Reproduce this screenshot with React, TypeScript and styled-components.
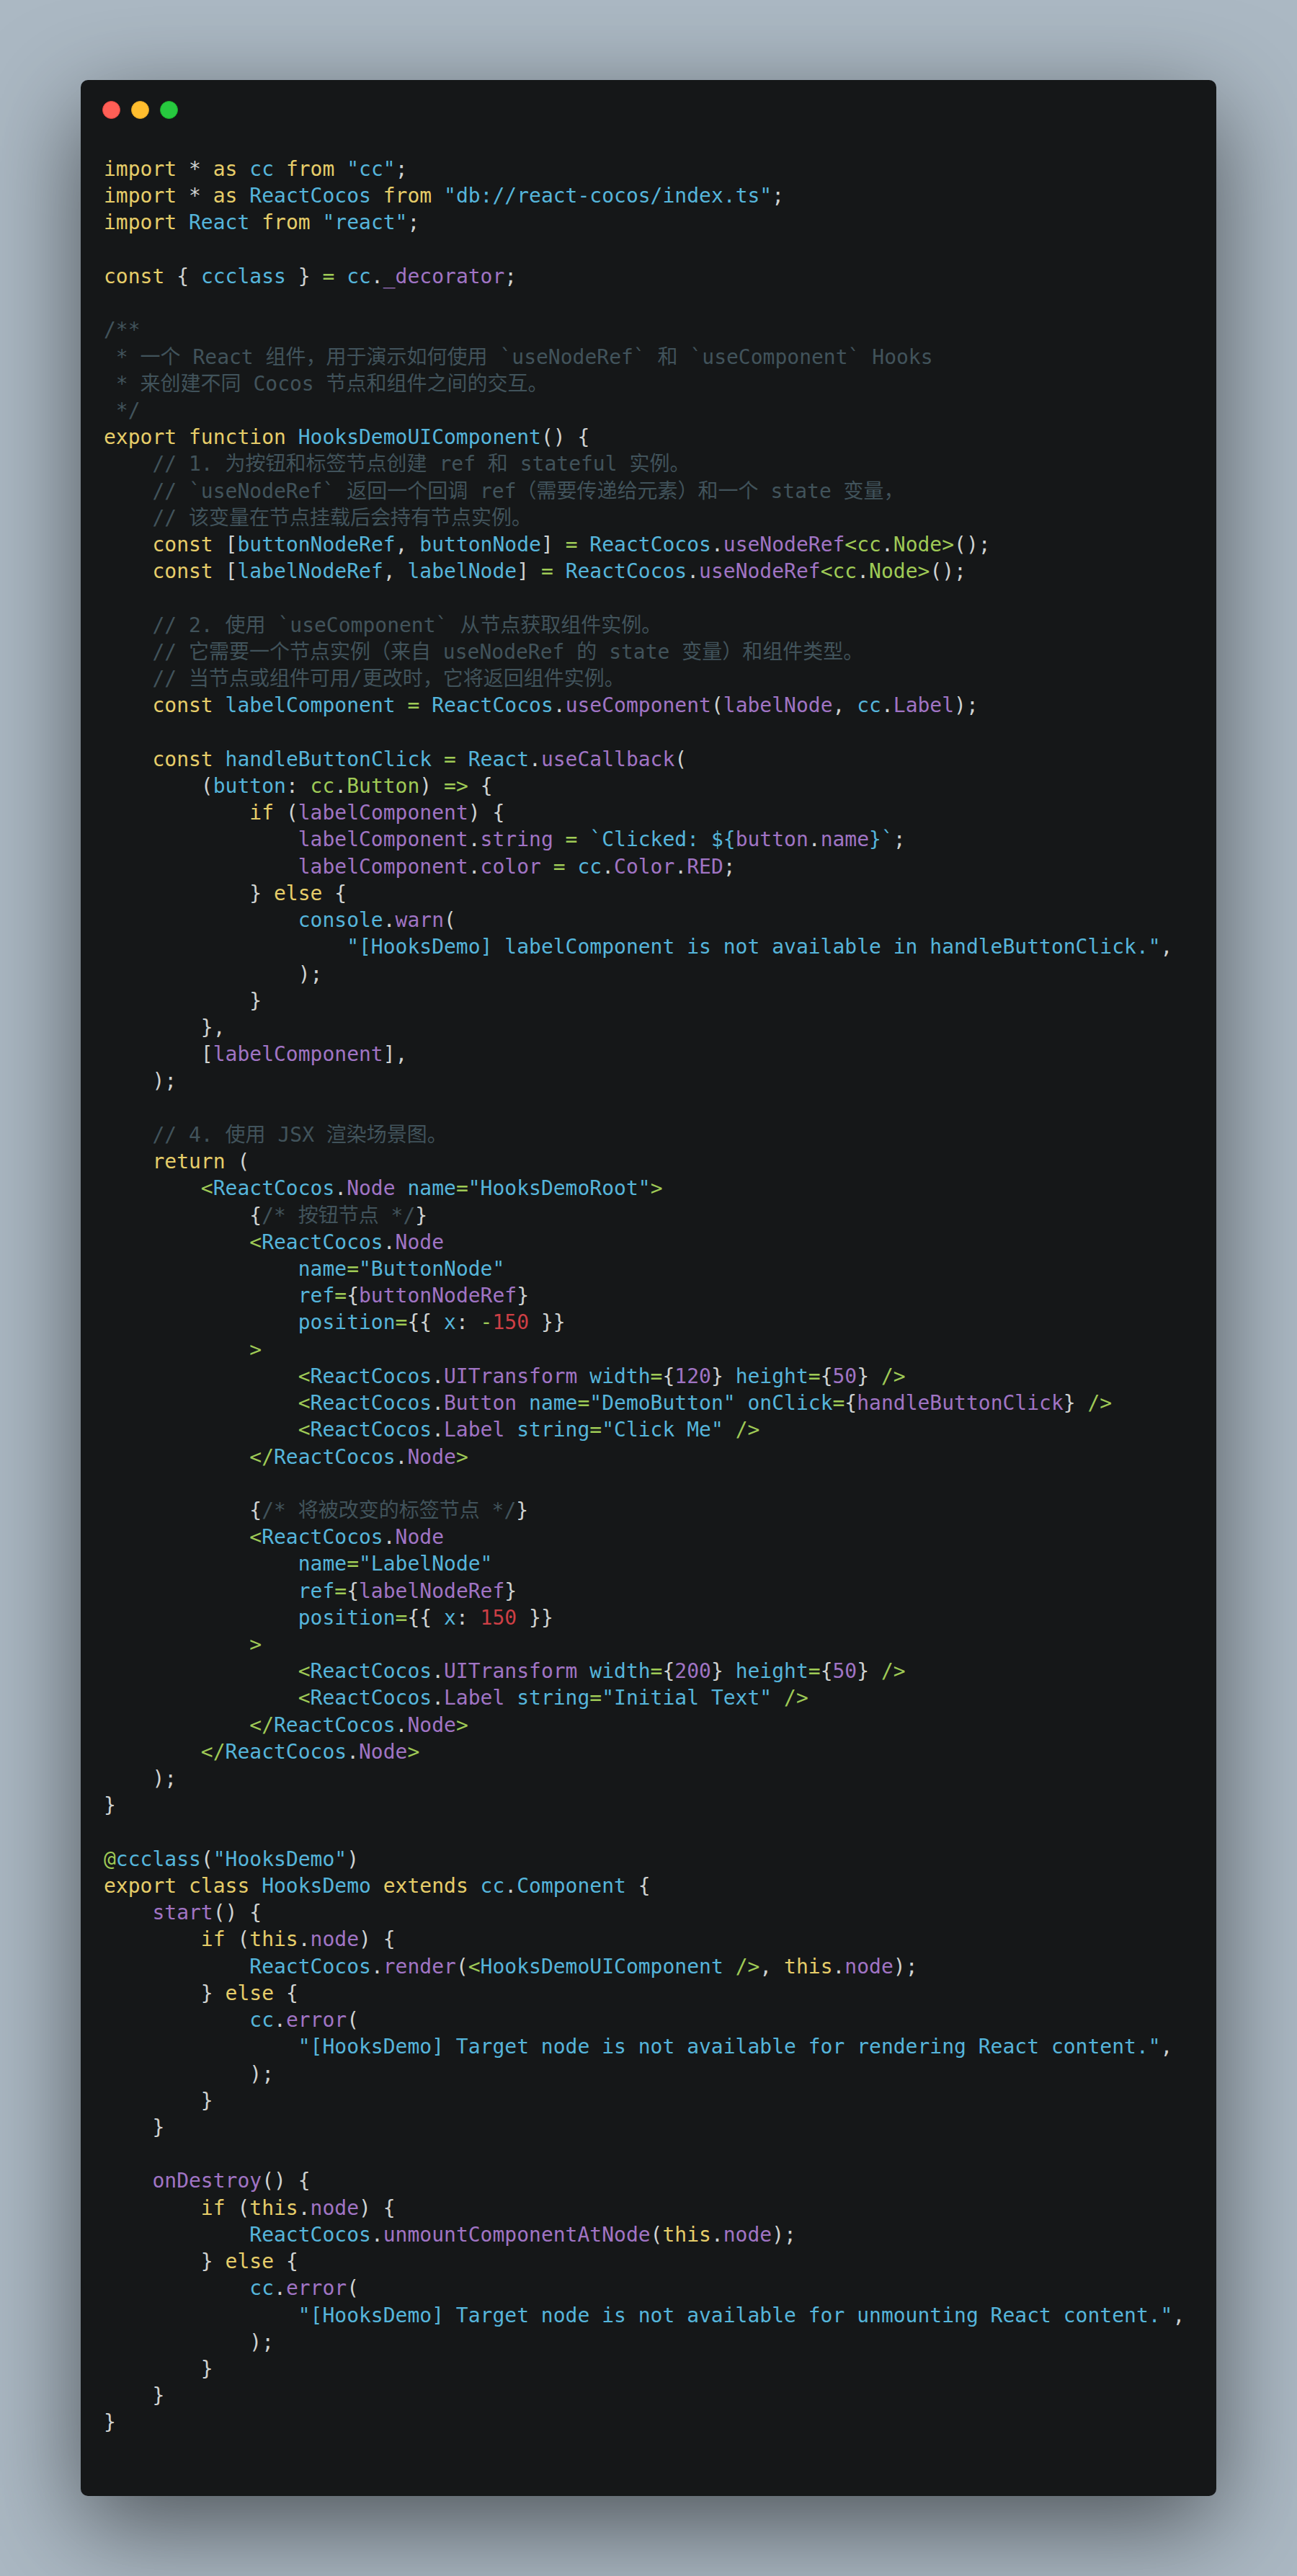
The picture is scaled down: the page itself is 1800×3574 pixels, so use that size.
import React from "react";
import styled, { createGlobalStyle } from "styled-components";

type Kind = "k" | "b" | "v" | "g" | "r" | "c" | "p";

const palette: Record<Kind, string> = {
  k: "#e6cd69",
  b: "#55b5db",
  v: "#a074c4",
  g: "#9fca56",
  r: "#cd3f45",
  c: "#41535b",
  p: "#cfd2d1",
};

const GlobalStyle = createGlobalStyle`
  html, body {
    margin: 0;
    padding: 0;
    background: #abb8c3;
  }
`;

const Page = styled.div`
  box-sizing: border-box;
  width: 1800px;
  height: 3574px;
  padding: 111px 112px;
  background: #abb8c3;
  overflow: hidden;
`;

const Window = styled.main`
  box-sizing: border-box;
  height: 3352px;
  padding: 29px 32px 0;
  background: #151718;
  border-radius: 10px;
  box-shadow: 0 40px 136px rgba(0, 0, 0, 0.55);
`;

const Controls = styled.div`
  display: flex;
  gap: 15px;
  margin-left: -2.5px;
`;

const Dot = styled.span<{ $fill: string; $edge: string }>`
  box-sizing: border-box;
  width: 25px;
  height: 25px;
  border-radius: 50%;
  background: ${(p) => p.$fill};
  border: 1px solid ${(p) => p.$edge};
`;

const Code = styled.pre`
  margin: 51px 0 0;
  font-family: "DejaVu Sans Mono", "Noto Sans CJK SC", monospace;
  font-size: 28px;
  line-height: 37.21875px;
  color: #cfd2d1;
`;

const Line = styled.div`
  height: 37.21875px;
  white-space: pre;
`;

const Tok = styled.span<{ $kind: Kind }>`
  color: ${(p) => palette[p.$kind]};
`;

const source = `§kimport §p* §kas §bcc §kfrom §b"cc"§p;
§kimport §p* §kas §bReactCocos §kfrom §b"db://react-cocos/index.ts"§p;
§kimport §bReact §kfrom §b"react"§p;

§kconst §p{ §bccclass §p} §g= §bcc§p.§v_decorator§p;

§c/**
§c * 一个 React 组件，用于演示如何使用 \`useNodeRef\` 和 \`useComponent\` Hooks
§c * 来创建不同 Cocos 节点和组件之间的交互。
§c */
§kexport function §bHooksDemoUIComponent§p() {
§p    §c// 1. 为按钮和标签节点创建 ref 和 stateful 实例。
§p    §c// \`useNodeRef\` 返回一个回调 ref（需要传递给元素）和一个 state 变量，
§p    §c// 该变量在节点挂载后会持有节点实例。
§p    §kconst §p[§bbuttonNodeRef§p, §bbuttonNode§p] §g= §bReactCocos§p.§vuseNodeRef§g<cc§p.§gNode>§p();
§p    §kconst §p[§blabelNodeRef§p, §blabelNode§p] §g= §bReactCocos§p.§vuseNodeRef§g<cc§p.§gNode>§p();

§p    §c// 2. 使用 \`useComponent\` 从节点获取组件实例。
§p    §c// 它需要一个节点实例（来自 useNodeRef 的 state 变量）和组件类型。
§p    §c// 当节点或组件可用/更改时，它将返回组件实例。
§p    §kconst §blabelComponent §g= §bReactCocos§p.§vuseComponent§p(§vlabelNode§p, §bcc§p.§vLabel§p);

§p    §kconst §bhandleButtonClick §g= §bReact§p.§vuseCallback§p(
§p        (§bbutton§p: §gcc§p.§gButton§p) §g=> §p{
§p            §kif §p(§vlabelComponent§p) {
§p                §vlabelComponent§p.§vstring §g= §b\`Clicked: \${§vbutton§p.§vname§b}\`§p;
§p                §vlabelComponent§p.§vcolor §g= §bcc§p.§vColor§p.§vRED§p;
§p            } §kelse §p{
§p                §bconsole§p.§vwarn§p(
§p                    §b"[HooksDemo] labelComponent is not available in handleButtonClick."§p,
§p                );
§p            }
§p        },
§p        [§vlabelComponent§p],
§p    );

§p    §c// 4. 使用 JSX 渲染场景图。
§p    §kreturn §p(
§p        §g<§bReactCocos§p.§vNode §bname§g=§b"HooksDemoRoot"§g>
§p            {§c/* 按钮节点 */§p}
§p            §g<§bReactCocos§p.§vNode
§p                §bname§g=§b"ButtonNode"
§p                §bref§g=§p{§vbuttonNodeRef§p}
§p                §bposition§g=§p{{ §bx§p: §g-§r150 §p}}
§p            §g>
§p                §g<§bReactCocos§p.§vUITransform §bwidth§g=§p{§v120§p} §bheight§g=§p{§v50§p} §g/>
§p                §g<§bReactCocos§p.§vButton §bname§g=§b"DemoButton" §bonClick§g=§p{§vhandleButtonClick§p} §g/>
§p                §g<§bReactCocos§p.§vLabel §bstring§g=§b"Click Me" §g/>
§p            §g</§bReactCocos§p.§vNode§g>

§p            {§c/* 将被改变的标签节点 */§p}
§p            §g<§bReactCocos§p.§vNode
§p                §bname§g=§b"LabelNode"
§p                §bref§g=§p{§vlabelNodeRef§p}
§p                §bposition§g=§p{{ §bx§p: §r150 §p}}
§p            §g>
§p                §g<§bReactCocos§p.§vUITransform §bwidth§g=§p{§v200§p} §bheight§g=§p{§v50§p} §g/>
§p                §g<§bReactCocos§p.§vLabel §bstring§g=§b"Initial Text" §g/>
§p            §g</§bReactCocos§p.§vNode§g>
§p        §g</§bReactCocos§p.§vNode§g>
§p    );
§p}

§g@§bccclass§p(§b"HooksDemo"§p)
§kexport class §bHooksDemo §kextends §bcc§p.§bComponent §p{
§p    §vstart§p() {
§p        §kif §p(§kthis§p.§vnode§p) {
§p            §bReactCocos§p.§vrender§p(§g<§bHooksDemoUIComponent §g/>§p, §kthis§p.§vnode§p);
§p        } §kelse §p{
§p            §bcc§p.§verror§p(
§p                §b"[HooksDemo] Target node is not available for rendering React content."§p,
§p            );
§p        }
§p    }

§p    §vonDestroy§p() {
§p        §kif §p(§kthis§p.§vnode§p) {
§p            §bReactCocos§p.§vunmountComponentAtNode§p(§kthis§p.§vnode§p);
§p        } §kelse §p{
§p            §bcc§p.§verror§p(
§p                §b"[HooksDemo] Target node is not available for unmounting React content."§p,
§p            );
§p        }
§p    }
§p}`;

const lines = source.split("\n").map((row) =>
  row
    .split("§")
    .filter(Boolean)
    .map((part) => ({ kind: part[0] as Kind, text: part.slice(1) }))
);

export default function App() {
  return (
    <>
      <GlobalStyle />
      <Page>
        <Window>
          <Controls>
            <Dot $fill="#ff5f56" $edge="#e0443e" />
            <Dot $fill="#ffbd2e" $edge="#dea123" />
            <Dot $fill="#27c93f" $edge="#1aab29" />
          </Controls>
          <Code>
            {lines.map((tokens, i) => (
              <Line key={i}>
                {tokens.map((t, j) => (
                  <Tok key={j} $kind={t.kind}>
                    {t.text}
                  </Tok>
                ))}
              </Line>
            ))}
          </Code>
        </Window>
      </Page>
    </>
  );
}
